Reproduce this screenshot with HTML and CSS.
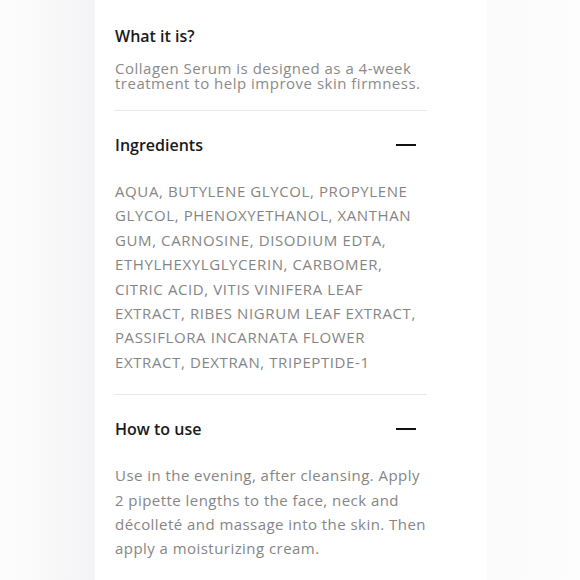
FILE: index.html
```html
<!DOCTYPE html>
<html lang="en">
<head>
<meta charset="utf-8">
<title>Collagen Serum</title>
<link rel="stylesheet" href="styles.css">
</head>
<body>
<div class="page">
  <main class="card">
    <section class="intro-block">
      <h3 class="title">What it is?</h3>
      <p class="intro">Collagen Serum is designed as a 4-week treatment to help improve skin firmness.</p>
    </section>
    <hr class="divider">
    <section class="acc">
      <div class="acc-head">
        <h3 class="title">Ingredients</h3>
        <span class="minus"></span>
      </div>
      <p class="acc-body upper">AQUA, BUTYLENE GLYCOL, PROPYLENE GLYCOL, PHENOXYETHANOL, XANTHAN GUM, CARNOSINE, DISODIUM EDTA, ETHYLHEXYLGLYCERIN, CARBOMER, CITRIC ACID, VITIS VINIFERA LEAF EXTRACT, RIBES NIGRUM LEAF EXTRACT, PASSIFLORA INCARNATA FLOWER EXTRACT, DEXTRAN, TRIPEPTIDE-1</p>
    </section>
    <hr class="divider">
    <section class="acc">
      <div class="acc-head">
        <h3 class="title">How to use</h3>
        <span class="minus"></span>
      </div>
      <p class="acc-body">Use in the evening, after cleansing. Apply 2 pipette lengths to the face, neck and décolleté and massage into the skin. Then apply a moisturizing cream.</p>
    </section>
  </main>
</div>
</body>
</html>
```
FILE: styles.css
```css
* { box-sizing: border-box; }
html, body { margin: 0; padding: 0; }
body {
  font-family: "Open Sans", "Liberation Sans", sans-serif;
  background: #ffffff;
}
.page {
  display: flex;
  min-height: 580px;
  background: linear-gradient(to right, #fdfdfd 0px, #f4f4f6 95px, #ffffff 95px, #ffffff 487px, #fbfbfb 487px, #fdfdfd 580px);
}
.card {
  margin-left: 95px;
  width: 392px;
  padding: 26px 60px 0 20px;
  background: #ffffff;
}
.title {
  margin: 0;
  font-size: 16px;
  line-height: 20px;
  font-weight: 600;
  color: #1a1a1a;
}
.intro {
  margin: 15px 0 0;
  font-size: 15px;
  line-height: 15px;
  letter-spacing: 0.5px;
  color: #8a8a8a;
}
.divider {
  margin: 19px 0 0;
  border: 0;
  height: 1px;
  background: #e6e6e6;
}
.acc { padding-top: 24px; }
.acc-head {
  display: flex;
  align-items: center;
  justify-content: space-between;
  padding-right: 11px;
}
.minus {
  width: 20px;
  height: 2px;
  background: #111111;
}
.acc-body {
  margin: 24px 0 20px;
  font-size: 15px;
  line-height: 24.4px;
  letter-spacing: 0.45px;
  color: #858585;
}
.upper { letter-spacing: 0.6px; }
```
